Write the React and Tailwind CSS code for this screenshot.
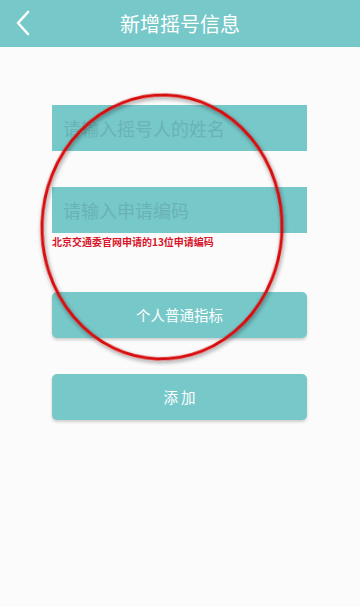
import React from "react";

export default function App() {
  return (
    <div
      className="relative w-[360px] h-[607px] bg-[#fbfbfb] overflow-hidden"
      style={{ fontFamily: '"Noto Sans CJK SC", "Noto Sans", sans-serif' }}
    >
      <header className="relative flex h-[47px] items-center justify-center bg-[#77c8c9]">
        <button className="absolute left-[14px] top-[10px] flex h-[26px] w-[18px] items-center justify-center">
          <svg width="16" height="26" viewBox="0 0 16 26" fill="none">
            <path d="M13 2 L3 13 L13 24" stroke="white" strokeWidth="2.6" strokeLinecap="round" strokeLinejoin="round" />
          </svg>
        </button>
        <h1 className="text-[20px] leading-none text-white">新增摇号信息</h1>
      </header>

      <main className="flex flex-col pl-[52px] pr-[53px]">
        <div className="mt-[58px] h-[46px] bg-[#77c8c9] flex items-center">
          <input
            className="w-full bg-transparent pl-[11px] text-[18px] text-white outline-none placeholder:text-[#69b3b4]"
            placeholder="请输入摇号人的姓名"
          />
        </div>
        <div className="mt-[36px] h-[46px] bg-[#77c8c9] flex items-center">
          <input
            className="w-full bg-transparent pl-[11px] text-[18px] text-white outline-none placeholder:text-[#69b3b4]"
            placeholder="请输入申请编码"
          />
        </div>
        <p className="mt-[2px] text-[10px] leading-[14px] font-bold text-[#d8142a]">北京交通委官网申请的13位申请编码</p>
        <button className="mt-[43px] h-[46px] rounded-[5px] bg-[#77c8c9] text-[14.5px] text-white shadow-[0_2px_3px_rgba(0,0,0,0.18)]">
          个人普通指标
        </button>
        <button className="mt-[36px] h-[46px] rounded-[5px] bg-[#77c8c9] text-[14.5px] text-white shadow-[0_2px_3px_rgba(0,0,0,0.18)]">
          添 加
        </button>
      </main>

      <svg className="pointer-events-none absolute left-0 top-0" width="360" height="607" viewBox="0 0 360 607">
        <defs>
          <filter id="sh" x="-20%" y="-20%" width="140%" height="140%">
            <feGaussianBlur in="SourceAlpha" stdDeviation="2.2" />
            <feOffset dx="1" dy="1.5" result="b" />
            <feFlood floodColor="#000" floodOpacity="0.45" />
            <feComposite in2="b" operator="in" />
            <feMerge>
              <feMergeNode />
              <feMergeNode in="SourceGraphic" />
            </feMerge>
          </filter>
        </defs>
        <ellipse
          cx="162"
          cy="227"
          rx="120"
          ry="132"
          transform="rotate(2 162 227)"
          fill="none"
          stroke="#d80c0c"
          strokeWidth="3"
          filter="url(#sh)"
        />
      </svg>
    </div>
  );
}
